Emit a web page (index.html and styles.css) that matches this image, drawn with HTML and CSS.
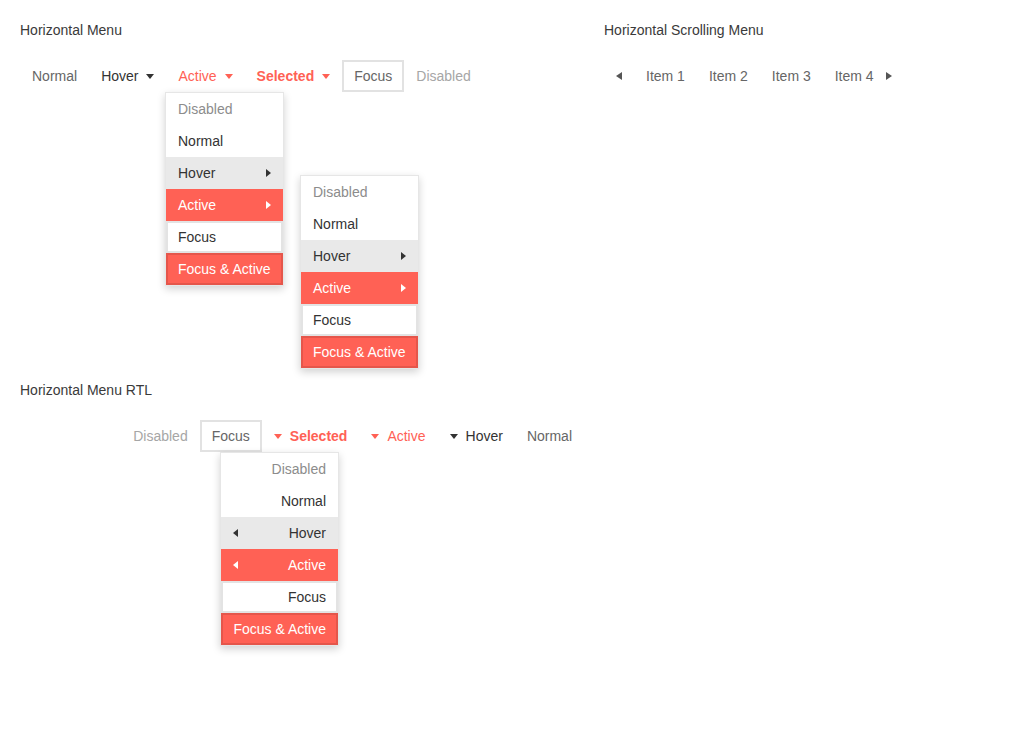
FILE: index.html
```html
<!DOCTYPE html>
<html>
<head>
<meta charset="utf-8">
<link rel="stylesheet" href="styles.css">
</head>
<body>
<div class="page">
  <div class="col-left">
    <section class="section">
      <h2 class="title">Horizontal Menu</h2>
      <div class="menubar">
        <div class="mi">Normal</div>
        <div class="mi hover">Hover <span class="tri-down"></span></div>
        <div class="mi active">Active <span class="tri-down"></span></div>
        <div class="mi selected">Selected <span class="tri-down"></span></div>
        <div class="mi focus">Focus</div>
        <div class="mi disabled">Disabled</div>
      </div>
      <div class="dropdown dd1">
        <div class="di disabled">Disabled</div>
        <div class="di">Normal</div>
        <div class="di hover">Hover <span class="tri-right"></span></div>
        <div class="di active">Active <span class="tri-right"></span></div>
        <div class="di focus">Focus</div>
        <div class="di focus-active">Focus &amp; Active</div>
      </div>
      <div class="dropdown dd2">
        <div class="di disabled">Disabled</div>
        <div class="di">Normal</div>
        <div class="di hover">Hover <span class="tri-right"></span></div>
        <div class="di active">Active <span class="tri-right"></span></div>
        <div class="di focus">Focus</div>
        <div class="di focus-active">Focus &amp; Active</div>
      </div>
    </section>
    <section class="section rtl-section">
      <h2 class="title">Horizontal Menu RTL</h2>
      <div class="menubar rtl" dir="rtl">
        <div class="mi">Normal</div>
        <div class="mi hover">Hover <span class="tri-down"></span></div>
        <div class="mi active">Active <span class="tri-down"></span></div>
        <div class="mi selected">Selected <span class="tri-down"></span></div>
        <div class="mi focus">Focus</div>
        <div class="mi disabled">Disabled</div>
      </div>
      <div class="dropdown dd3" dir="rtl">
        <div class="di disabled">Disabled</div>
        <div class="di">Normal</div>
        <div class="di hover">Hover <span class="tri-left"></span></div>
        <div class="di active">Active <span class="tri-left"></span></div>
        <div class="di focus">Focus</div>
        <div class="di focus-active">Focus &amp; Active</div>
      </div>
    </section>
  </div>
  <div class="col-right">
    <section class="section">
      <h2 class="title">Horizontal Scrolling Menu</h2>
      <div class="menubar scroll">
        <div class="scroll-btn left"><span class="tri-left small"></span></div>
        <div class="mi">Item 1</div>
        <div class="mi">Item 2</div>
        <div class="mi">Item 3</div>
        <div class="mi last">Item 4</div>
        <div class="scroll-btn right"><span class="tri-right small"></span></div>
      </div>
    </section>
  </div>
</div>
</body>
</html>
```

FILE: styles.css
```css
* { box-sizing: border-box; }
html, body { margin: 0; padding: 0; background: #fff; }
body {
  font-family: "Liberation Sans", Arial, sans-serif;
  font-size: 14px;
  color: #333;
}
.page {
  display: grid;
  grid-template-columns: 564px 400px;
  column-gap: 20px;
  padding: 20px;
  min-height: 740px;
}
.section { position: relative; }
.col-left .section:first-child { height: 360px; }
.rtl-section { height: 300px; }
.title {
  margin: 0 0 20px 0;
  font-size: 14px;
  font-weight: 400;
  line-height: 20px;
  color: #3a3a3a;
}
.menubar {
  display: flex;
  align-items: center;
  height: 32px;
}
.mi {
  display: flex;
  align-items: center;
  gap: 8px;
  height: 32px;
  padding: 0 12px;
  color: #666;
  white-space: nowrap;
}
.mi.hover { color: #333; }
.mi.active { color: #ff6155; }
.mi.selected { color: #ff6155; font-weight: 700; }
.mi.focus { border: 2px solid #e2e2e2; padding: 0 10px; }
.mi.disabled { color: #a6a6a6; }
.tri-down {
  display: inline-block;
  width: 0; height: 0;
  border-left: 4px solid transparent;
  border-right: 4px solid transparent;
  border-top: 5px solid currentColor;
  margin-top: 1px;
}
.mi.hover .tri-down { border-top-color: #333; }
.tri-right {
  display: inline-block;
  width: 0; height: 0;
  border-top: 4px solid transparent;
  border-bottom: 4px solid transparent;
  border-left: 5px solid currentColor;
}
.tri-left {
  display: inline-block;
  width: 0; height: 0;
  border-top: 4px solid transparent;
  border-bottom: 4px solid transparent;
  border-right: 5px solid currentColor;
}
.dropdown {
  position: absolute;
  width: 119px;
  background: #fff;
  border: 1px solid #e6e6e6;
  box-shadow: 0 3px 8px rgba(0,0,0,0.18);
}
.dd1 { left: 145px; top: 72px; }
.dd2 { left: 280px; top: 155px; }
.dd3 { left: 200px; top: 72px; }
.di {
  display: flex;
  align-items: center;
  justify-content: space-between;
  height: 32px;
  padding: 0 12px;
  color: #333;
  white-space: nowrap;
}
.di.disabled { color: #8c8c8c; }
.di.hover { background: #e9e9e9; }
.di.active { background: #ff6155; color: #fff; }
.di.focus { border: 2px solid #e3e3e3; padding: 0 10px; }
.di.focus-active { background: #ff6155; color: #fff; border: 2px solid #e5564b; padding: 0 10px; }
.scroll .mi { color: #666; }
.scroll-btn {
  display: flex;
  align-items: center;
  justify-content: center;
  height: 32px;
  color: #555;
}
.scroll-btn.left { width: 30px; }
.scroll-btn.right { width: 6px; justify-content: flex-start; }
.tri-left.small { border-right-width: 6px; }
.tri-right.small { border-left-width: 6px; }
```
